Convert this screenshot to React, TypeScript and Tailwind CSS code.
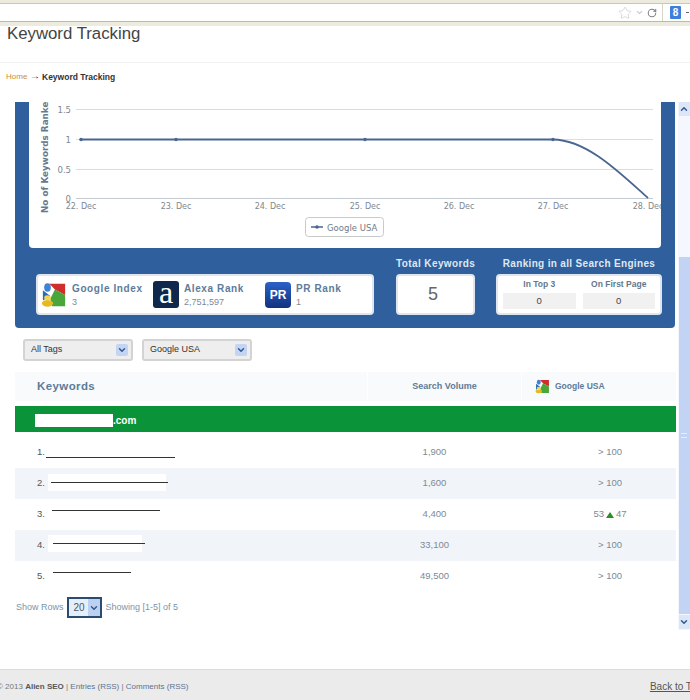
import React from 'react';
import { ChevronDown, ChevronUp, RotateCw, Star } from 'lucide-react';

const rows = [
  { no: '1.', volume: '1,900', rank: '> 100', tint: false, height: 'h-[36px] pt-[4px]', box: 'ml-[1px] mt-[13px] w-[129px]', line: 'w-[129px]', mask: '' },
  { no: '2.', volume: '1,600', rank: '> 100', tint: true, height: 'h-[31px]', box: 'ml-[3px] mt-[6px] w-[118px]', line: 'ml-[3px] w-[117px] shrink-0', mask: 'bg-white' },
  { no: '3.', volume: '4,400', rank: '', tint: false, height: 'h-[31px]', box: 'ml-[7px] mt-[3px] w-[108px]', line: 'w-[108px]', mask: '' },
  { no: '4.', volume: '33,100', rank: '> 100', tint: true, height: 'h-[31px]', box: 'ml-[3px] mt-[5px] w-[94px]', line: 'ml-[5px] w-[92px] shrink-0', mask: 'bg-white' },
  { no: '5.', volume: '49,500', rank: '> 100', tint: false, height: 'h-[31px]', box: 'ml-[8px] mt-[3px] w-[78px]', line: 'w-[78px]', mask: '' },
];

const ticks = [
  { x: 52, label: '22. Dec' },
  { x: 147, label: '23. Dec' },
  { x: 241, label: '24. Dec' },
  { x: 336, label: '25. Dec' },
  { x: 430, label: '26. Dec' },
  { x: 524, label: '27. Dec' },
  { x: 619, label: '28. Dec' },
];

const PlacesIcon = ({ size }: { size: number }) => (
  <svg width={size} height={size} viewBox="0 0 28 28" className="shrink-0">
    <path d="M9 2h17v12L15 8z" fill="#cf2e2a" />
    <path d="M15 8l11 6v12H12l-2-8z" fill="#4aa53a" />
    <path d="M2 9l8 6-8 5z" fill="#2b6ab5" />
    <ellipse cx="7" cy="6" rx="3.6" ry="4.6" fill="#3f83d6" />
    <ellipse cx="7" cy="23" rx="6" ry="3.6" fill="#e6b91e" />
    <ellipse cx="7" cy="17" rx="3.5" ry="2.6" fill="#f4d64e" />
  </svg>
);

const TrafficChart = () => (
  <svg width="632" height="146" viewBox="0 0 632 146" className="block">
    <g stroke="#dcdcdc" strokeWidth="1">
      <line x1="47" y1="7.5" x2="624" y2="7.5" />
      <line x1="47" y1="37.5" x2="624" y2="37.5" />
      <line x1="47" y1="67.5" x2="624" y2="67.5" />
    </g>
    <line x1="47" y1="96.5" x2="624" y2="96.5" stroke="#c4cad2" />
    <g fill="#7d8791" fontFamily="'DejaVu Sans', sans-serif" fontSize="8.5" textAnchor="end">
      <text x="42" y="11">1.5</text>
      <text x="42" y="41">1</text>
      <text x="42" y="71">0.5</text>
      <text x="42" y="100">0</text>
    </g>
    <g fill="#7d8791" fontFamily="'DejaVu Sans', sans-serif" fontSize="8" textAnchor="middle">
      {ticks.map((t) => (
        <text key={t.label} x={t.x} y="107">
          {t.label}
        </text>
      ))}
    </g>
    <text
      transform="rotate(-90 19 111)"
      x="19"
      y="111"
      fill="#667a8e"
      fontFamily="'DejaVu Sans', sans-serif"
      fontSize="8.8"
      fontWeight="bold"
    >
      No of Keywords Ranked
    </text>
    <path d="M52 37.5H524C558 38 590 70 619 96" fill="none" stroke="#4a6690" strokeWidth="1.8" />
    {[52, 147, 336, 524].map((x) => (
      <circle key={x} cx={x} cy="37.5" r="1.8" fill="#4a6690" />
    ))}
    <rect x="276.5" y="115.5" width="78" height="19" rx="3" fill="#fff" stroke="#c9c9c9" />
    <line x1="282" y1="125" x2="294" y2="125" stroke="#4a6690" strokeWidth="1.6" />
    <circle cx="288" cy="125" r="1.8" fill="#4a6690" />
    <text x="298" y="128.5" fill="#6f7b87" fontFamily="'DejaVu Sans', sans-serif" fontSize="8.5">
      Google USA
    </text>
  </svg>
);

const StatItem = ({ icon, title, value, width }: { icon: React.ReactNode; title: string; value: string; width: string }) => (
  <div className={`flex items-center gap-[5px] ${width}`}>
    {icon}
    <div className="pt-[2px] leading-none">
      <div className="text-[10px] font-bold tracking-[0.6px] text-[#5d7c99]">{title}</div>
      <div className="mt-[4px] text-[9px] text-[#7f8a94]">{value}</div>
    </div>
  </div>
);

const FilterSelect = ({ label }: { label: string }) => (
  <div className="flex h-[22px] w-[110px] items-center justify-between rounded-[3px] border-2 border-[#d3d3d3] bg-[#eeeeee] pl-[6px] pr-[3px] text-[9px] text-[#333]">
    <span>{label}</span>
    <span className="flex h-[12px] w-[12px] items-center justify-center rounded-[2px] bg-[#c3d5f2]">
      <ChevronDown size={10} strokeWidth={3.5} className="text-[#34588f]" />
    </span>
  </div>
);

const App = () => {
  return (
    <div className="relative flex h-[700px] w-[690px] flex-col overflow-hidden bg-white font-['Liberation_Sans',Arial,sans-serif]">
      {/* browser chrome */}
      <div className="h-[4px] shrink-0 border-b border-[#c9c8b4] bg-[#ecebdd]" />
      <div className="flex h-[17px] shrink-0 items-center justify-end bg-white">
        <Star size={14} strokeWidth={1} className="text-[#b8c0c8]" />
        <ChevronDown size={9} strokeWidth={3} className="ml-[3px] text-[#c4c8cc]" />
        <RotateCw size={10} strokeWidth={2.5} className="ml-[3px] mr-[5px] text-[#7b8288]" />
        <div className="h-[17px] w-px bg-[#d7d6c6]" />
        <div className="ml-[7px] mr-[5px] flex h-[13px] w-[11px] items-center justify-center rounded-[1px] bg-[#3f7fdc] text-[10px] font-bold text-white">
          8
        </div>
        <span className="mr-[1px] h-px w-[3px] bg-[#666]" />
      </div>
      <div className="h-[5px] shrink-0 border-t border-[#bdbca3] bg-[#ecebdd]" />

      {/* page heading */}
      <div className="h-[37px] shrink-0 border-b border-[#f1f1f1] pl-[7px] text-[16.8px] leading-[16px] text-[#444]">
        Keyword Tracking
      </div>
      <div className="flex h-[39px] shrink-0 items-center pb-[11px] pl-[6px] text-[8px]">
        <span className="w-[24px] text-[#c98c3a]">Home</span>
        <span className="-mt-[2px] w-[12px] text-[10px] leading-none text-[#333]">→</span>
        <span className="text-[8.5px] font-bold text-[#333]">Keyword Tracking</span>
      </div>

      <div className="flex min-h-0 flex-1">
        <div className="w-[678px] shrink-0">
          {/* summary panel */}
          <div className="ml-[15px] h-[226px] w-[660px] rounded-b-[4px] bg-[#2f5f9c]">
            <div className="ml-[14px] w-[632px] overflow-hidden rounded-b-[4px] bg-white">
              <TrafficChart />
            </div>
            <div className="mt-[8px] flex items-end pl-[21px]">
              <div className="flex h-[41px] w-[338px] items-center rounded-[4px] border-2 border-[#dfe6ef] bg-white pl-[3px]">
                <StatItem
                  width="w-[112px]"
                  icon={<PlacesIcon size={26} />}
                  title="Google Index"
                  value="3"
                />
                <StatItem
                  width="w-[112px]"
                  icon={
                    <div className="flex h-[27px] w-[26px] shrink-0 items-center justify-center rounded-[3px] bg-[#10284c] pb-[5px] font-['Liberation_Serif',serif] text-[32px] leading-none text-white">
                      a
                    </div>
                  }
                  title="Alexa Rank"
                  value="2,751,597"
                />
                <StatItem
                  width="w-[100px]"
                  icon={
                    <div className="flex h-[26px] w-[26px] shrink-0 items-center justify-center rounded-[4px] bg-linear-to-b from-[#2a62c8] to-[#14317f] text-[12px] font-bold text-white">
                      PR
                    </div>
                  }
                  title="PR Rank"
                  value="1"
                />
              </div>
              <div className="ml-[22px] w-[79px] text-center">
                <div className="mb-[3px] whitespace-nowrap text-[10px] font-bold tracking-[0.4px] text-[#dfe8f2]">Total Keywords</div>
                <div className="flex h-[41px] items-center justify-center rounded-[4px] border-2 border-[#dfe6ef] bg-white pr-[5px] text-[18px] text-[#666]">
                  5
                </div>
              </div>
              <div className="ml-[21px] w-[166px] text-center">
                <div className="mb-[3px] whitespace-nowrap text-[10px] font-bold tracking-[0.33px] text-[#dfe8f2]">
                  Ranking in all Search Engines
                </div>
                <div className="flex h-[41px] gap-[7px] rounded-[4px] border-2 border-[#dfe6ef] bg-white px-[5px] pt-[2px]">
                  <div className="flex-1">
                    <div className="text-[8.5px] font-bold leading-[12px] text-[#64788c]">In Top 3</div>
                    <div className="mt-[3px] h-[16px] bg-[#f1f1f1] text-[9.5px] leading-[16px] text-[#444]">0</div>
                  </div>
                  <div className="flex-1">
                    <div className="text-[8.5px] font-bold leading-[12px] text-[#64788c]">On First Page</div>
                    <div className="mt-[3px] h-[16px] bg-[#f1f1f1] text-[9.5px] leading-[16px] text-[#444]">0</div>
                  </div>
                </div>
              </div>
            </div>
          </div>

          {/* filters */}
          <div className="mt-[11px] flex gap-[9px] pl-[23px]">
            <FilterSelect label="All Tags" />
            <FilterSelect label="Google USA" />
          </div>

          {/* keyword table */}
          <div className="ml-[15px] mt-[11px] w-[661px]">
            <div className="grid h-[29px] grid-cols-[352px_155px_154px] items-center bg-[#f8fafc]">
              <div className="pl-[22px] text-[11.5px] font-bold tracking-[0.4px] text-[#5d7c99]">Keywords</div>
              <div className="flex h-full items-center justify-center border-x border-white text-[9px] font-bold text-[#5d7c99]">
                Search Volume
              </div>
              <div className="flex h-full items-center gap-[5px] pl-[13px] text-[8.5px] font-bold text-[#5d7c99]">
                <PlacesIcon size={15} />
                Google USA
              </div>
            </div>
            <div className="mt-[5px] flex h-[26px] items-center bg-[#0b9339] pl-[20px] pt-[2px] text-[10px] font-bold text-white">
              <span className="h-[13px] w-[78px] bg-white" />
              <span>.com</span>
            </div>
            {rows.map((row) => (
              <div
                key={row.no}
                className={`grid grid-cols-[352px_155px_154px] items-center text-[9.5px] text-[#7d8a96] ${row.height} ${row.tint ? 'bg-[#f1f5f9]' : 'bg-white'}`}
              >
                <div className="flex h-full items-start self-stretch pl-[22px] text-[#555]">
                  <span className="self-center">{row.no}</span>
                  <span className={`flex h-[17px] items-center ${row.box} ${row.mask}`}>
                    <span className={`h-px bg-[#333] ${row.line}`} />
                  </span>
                </div>
                <div className="pr-[20px] text-center">{row.volume}</div>
                <div className="pl-[24px] pr-[2px] text-center">
                  {row.rank || (
                    <span className="inline-flex items-center gap-[2px]">
                      53
                      <span className="h-0 w-0 border-x-[4px] border-b-[6px] border-x-transparent border-b-[#2e8b2e]" />
                      47
                    </span>
                  )}
                </div>
              </div>
            ))}
          </div>

          {/* pager */}
          <div className="mt-[5px] flex items-center pl-[16px] text-[9px] text-[#7d94aa]">
            <span>Show Rows</span>
            <div className="ml-[3px] flex h-[21px] w-[35px] items-center justify-between border-2 border-[#2a4c72] bg-[#e4effb] pl-[5px] text-[#555]">
              <span className="text-[10px]">20</span>
              <span className="flex h-full w-[12px] items-center justify-center bg-[#bcd0ef]">
                <ChevronDown size={10} strokeWidth={3.5} className="text-[#34588f]" />
              </span>
            </div>
            <span className="ml-[4px]">Showing [1-5] of 5</span>
          </div>
        </div>

        {/* inner scrollbar */}
        <div className="flex h-[528px] w-[12px] shrink-0 flex-col items-center bg-[#f4f7fd]">
          <div className="flex h-[14px] w-[11px] items-center justify-center bg-[#dbe6f8]">
            <ChevronUp size={10} strokeWidth={3.5} className="text-[#34588f]" />
          </div>
          <div className="mt-[141px] flex h-[357px] w-[11px] items-center justify-center bg-[#c3d3f3]">
            <span className="h-[5px] w-[6px] border-y border-[#e7eefb]" />
          </div>
          <div className="mt-[1px] flex h-[14px] w-[11px] items-center justify-center bg-[#dbe6f8]">
            <ChevronDown size={10} strokeWidth={3.5} className="text-[#34588f]" />
          </div>
        </div>
      </div>

      {/* footer */}
      <div className="flex h-[31px] shrink-0 items-center justify-between overflow-hidden border-t border-[#dcdcdc] bg-[#ebebeb] pt-[3px] text-[8px] text-[#777]">
        <div className="-ml-[3px] whitespace-nowrap">
          © 2013 <span className="font-bold text-[#555]">Alien SEO</span> | <span className="text-[#5b7391]">Entries (RSS)</span> |{' '}
          <span className="text-[#5b7391]">Comments (RSS)</span>
        </div>
        <div className="-mr-[12px] whitespace-nowrap text-[10px] text-[#555] underline">Back to Top</div>
      </div>
    </div>
  );
};

export default App;
